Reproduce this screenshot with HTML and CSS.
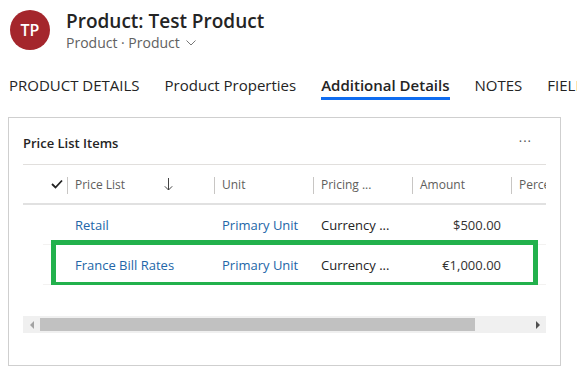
FILE: index.html
```html
<!DOCTYPE html>
<html lang="en">
<head>
    <meta charset="UTF-8">
    <meta name="viewport" content="width=device-width, initial-scale=1.0">
    <title>Product: Test Product</title>
    <link rel="stylesheet" href="styles.css">
</head>
<body>
    <div class="record-header">
        <div class="avatar">TP</div>
        <div class="record-title">
            <h1>Product: Test Product</h1>
            <div class="record-sub">
                Product · Product
                <svg class="chevron" width="10" height="6" viewBox="0 0 10 6"><path d="M0.5 0.5 L5 5 L9.5 0.5" fill="none" stroke="#777" stroke-width="1"/></svg>
            </div>
        </div>
    </div>

    <div class="tabs">
        <span class="tab">PRODUCT DETAILS</span>
        <span class="tab">Product Properties</span>
        <span class="tab active">Additional Details</span>
        <span class="tab">NOTES</span>
        <span class="tab">FIELD SERVICE</span>
    </div>

    <div class="card">
        <div class="card-header">
            <h2>Price List Items</h2>
            <span class="more">···</span>
        </div>

        <div class="grid">
            <div class="grid-row grid-head">
                <div class="cell spacer"></div>
                <div class="cell check">
                    <svg width="12" height="10" viewBox="0 0 12 10"><path d="M1 5 L4.5 8.5 L11 1.5" fill="none" stroke="#222" stroke-width="1.8"/></svg>
                </div>
                <div class="cell col-name">
                    Price List
                    <svg class="sort" width="9" height="13" viewBox="0 0 9 13"><path d="M4.5 0 V12 M0.8 8.3 L4.5 12 L8.2 8.3" fill="none" stroke="#444" stroke-width="1"/></svg>
                </div>
                <div class="cell">Unit</div>
                <div class="cell">Pricing ...</div>
                <div class="cell">Amount</div>
                <div class="cell">Percentage</div>
            </div>
            <div class="grid-row">
                <div class="cell spacer"></div>
                <div class="cell check"></div>
                <div class="cell link">Retail</div>
                <div class="cell link">Primary Unit</div>
                <div class="cell">Currency ...</div>
                <div class="cell num">$500.00</div>
                <div class="cell"></div>
            </div>
            <div class="grid-row">
                <div class="cell spacer"></div>
                <div class="cell check"></div>
                <div class="cell link">France Bill Rates</div>
                <div class="cell link">Primary Unit</div>
                <div class="cell">Currency ...</div>
                <div class="cell num">€1,000.00</div>
                <div class="cell"></div>
            </div>
            <!-- highlight drawn round the second row -->
            <div class="highlight"></div>
        </div>

        <div class="scrollbar">
            <span class="arrow left"></span>
            <span class="thumb"></span>
            <span class="track"></span>
            <span class="arrow right"></span>
        </div>
    </div>
</body>
</html>
```

FILE: styles.css
```css
* {
    margin: 0;
    padding: 0;
    box-sizing: border-box;
}

body {
    font-family: 'Open Sans', sans-serif;
    background: white;
    color: #242424;
    width: 577px;
    height: 373px;
    overflow: hidden;
}

.record-header {
    display: flex;
    align-items: flex-start;
    gap: 16px;
    padding: 10px 0 0 10px;
}

.avatar {
    width: 40px;
    height: 40px;
    border-radius: 50%;
    background: #a4262c;
    color: white;
    font-size: 16px;
    font-weight: 600;
    display: flex;
    align-items: center;
    justify-content: center;
}

.record-title h1 {
    font-size: 19px;
    font-weight: 600;
    line-height: 22px;
}

.record-sub {
    font-size: 14px;
    color: #616161;
    line-height: 19px;
    margin-top: 1px;
    display: flex;
    align-items: center;
    gap: 6px;
}

.chevron {
    margin-top: 1px;
}

.tabs {
    display: flex;
    gap: 25px;
    padding-left: 9px;
    margin-top: 23px;
    white-space: nowrap;
    overflow: hidden;
}

.tab {
    font-size: 15px;
    line-height: 20px;
    padding: 0 0 2px;
    border-bottom: 3px solid transparent;
    color: #242424;
}

.tab.active {
    font-weight: 600;
    border-bottom-color: #0f6cf0;
}

.card {
    margin: 17px 0 0 8px;
    width: 553px;
    height: 249px;
    border: 1px solid #cfcfcf;
    padding: 0 14px 0 14px;
}

.card-header {
    display: flex;
    justify-content: space-between;
    align-items: center;
    height: 47px;
    border-bottom: 1px solid #e1dfdd;
}

.card-header h2 {
    font-size: 13px;
    font-weight: 600;
    margin-top: 3px;
}

.more {
    font-size: 13px;
    color: #555;
    margin: 0 14px 0 0;
    letter-spacing: 1px;
}

.grid {
    position: relative;
    overflow: hidden;
    height: 120px;
}

.grid-row {
    display: grid;
    grid-template-columns: 20px 24px 147px 99px 99px 99px 99px;
    height: 40px;
    align-items: center;
    font-size: 13px;
    white-space: nowrap;
}

.grid-row .cell {
    padding-left: 8px;
    overflow: hidden;
    height: 100%;
    display: flex;
    align-items: center;
}

.grid-row + .grid-row .cell:not(.spacer) {
    border-bottom: 1px solid #f3f2f1;
}

.grid-row .cell.spacer,
.grid-row .cell.check {
    padding-left: 0;
}

.grid-head {
    height: 40px;
    border-bottom: 2px solid #e1e1e1;
    font-size: 12px;
    color: #605e5c;
}

.grid-head .cell {
    position: relative;
}

.grid-head .cell.check {
    justify-content: flex-end;
    padding-right: 4px;
}

.grid-head .cell + .cell:not(.check)::before {
    content: '';
    position: absolute;
    left: 0;
    top: 12px;
    height: 17px;
    border-left: 1px solid #c8c6c4;
}

.sort {
    margin-left: 39px;
}

.link {
    color: #2266a8;
}

.grid-row .cell.num {
    justify-content: flex-end;
    padding-right: 10px;
    color: #323130;
}

.highlight {
    position: absolute;
    left: 28px;
    top: 75px;
    width: 487px;
    height: 47px;
    border: 5px solid #22b14c;
}

.scrollbar {
    display: flex;
    align-items: center;
    height: 17px;
    margin-top: 31px;
    background: #f0f0f0;
}

.arrow {
    width: 17px;
    height: 17px;
    display: flex;
    align-items: center;
    justify-content: center;
}

.arrow.left::after {
    content: '';
    border-right: 4px solid #a3a3a3;
    border-top: 4px solid transparent;
    border-bottom: 4px solid transparent;
}

.arrow.right::after {
    content: '';
    border-left: 4px solid #505050;
    border-top: 4px solid transparent;
    border-bottom: 4px solid transparent;
}

.thumb {
    width: 435px;
    height: 13px;
    background: #c1c1c1;
}

.track {
    flex: 1;
}
```
